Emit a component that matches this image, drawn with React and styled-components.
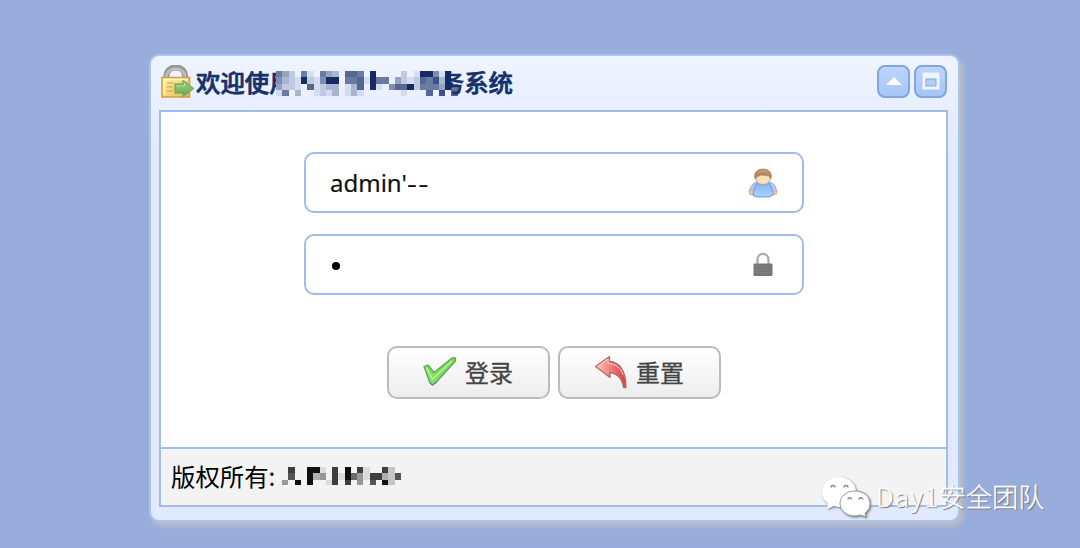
import React from 'react';
import styled, { createGlobalStyle } from 'styled-components';

const cjk = '"Noto Sans CJK SC", sans-serif';

const GlobalStyle = createGlobalStyle`
  * { box-sizing: border-box; }
  body { margin: 0; background: #98addc; font-family: ${cjk}; overflow: hidden; }
`;

const Page = styled.main`
  position: relative;
  height: 548px;
  padding: 54px 0 0 149px;
`;

const Window = styled.section`
  display: flex;
  flex-direction: column;
  width: 811px;
  height: 467.500px;
  padding: 0 10px 12px 8px;
  border: 2px solid #a6c5f1;
  border-radius: 10px;
  background: linear-gradient(#eff4ff, #e0e9fd 22%);
  box-shadow: 3px 4px 5px #bdbec2;
`;

const Header = styled.header`
  display: flex;
  align-items: center;
  height: 54px;
  flex: none;
  padding-left: 2px;
`;

const Title = styled.h1`
  display: flex;
  align-items: center;
  margin: -3px 0 0 1px;
  flex: 1;
  font-size: 24.4px;
  line-height: 36px;
  font-weight: 500;
  color: #15306a;
  -webkit-text-stroke: 0.7px #15306a;
  white-space: pre;
`;

const TitleLead = styled.span`
  width: 80px;
  overflow: hidden;
`;

const TitleTail = styled.span`
  clip-path: inset(0 0 0 11px);
`;

const Mosaic = styled.svg`
  display: block;
  flex: none;
  margin: ${(p) => p.$margin};
`;

const Tools = styled.div`
  display: flex;
  gap: 4px;
  margin: -4px 1px 0 0;
`;

const ToolButton = styled.button`
  width: 33px;
  height: 33px;
  padding: 0;
  border: 2px solid #83a5dc;
  border-radius: 8px;
  background: linear-gradient(#bdd5fc, #a5c5f6);
  display: grid;
  place-items: center;
`;

const Body = styled.div`
  flex: none;
  width: 789px;
  height: 339px;
  border: 2px solid #a0bce9;
  background: #fff;
  padding: 40px 0 0 1px;
  display: flex;
  flex-direction: column;
  align-items: center;
`;

const Field = styled.label`
  display: flex;
  align-items: center;
  width: 500px;
  height: 61px;
  margin-bottom: 20.500px;
  padding: 0 ${(p) => p.$right}px 0 24px;
  border: 2px solid #a0bce9;
  border-radius: 10px;
  flex: none;
`;

const Value = styled.span`
  flex: 1;
  font: 24px/34px "Noto Sans", sans-serif;
  color: #111;
  -webkit-text-stroke: 0.2px #111;
`;

const Dashes = styled.span`
  display: inline-block;
  transform: scaleX(1.28);
  transform-origin: 0 50%;
  letter-spacing: 1.200px;
`;

const Dot = styled.i`
  width: 8px;
  height: 8px;
  margin: 4px auto 0 2px;
  border-radius: 50%;
  background: #000;
`;

const Actions = styled.div`
  display: flex;
  gap: 8px;
  margin-top: 31px;
`;

const Button = styled.button`
  display: flex;
  align-items: center;
  width: 163px;
  height: 53px;
  padding: 0 0 1px 34px;
  gap: 8px;
  border: 2px solid #bbb;
  border-radius: 10px;
  background: linear-gradient(#fff, #ededed);
  color: #444;
  font: 24px/36px ${cjk};
  -webkit-text-stroke: 0.3px #444;
`;

const Footer = styled.footer`
  display: flex;
  align-items: center;
  width: 789px;
  height: 58px;
  padding: 0 0 2px 10px;
  border: 2px solid #a0bce9;
  border-top: 0;
  background: #f3f3f3;
  font-size: 24.4px;
  line-height: 36px;
  color: #000;
`;

const Owner = styled.span`
  width: 104px;
  white-space: nowrap;
`;

const Watermark = styled.div`
  position: absolute;
  left: 820px;
  top: 472px;
  display: flex;
  align-items: center;
  color: #fff;
  font: 300 26.3px/48px ${cjk};
  -webkit-text-stroke: 0.3px #fff;
  text-shadow: 1px 1px 1px #666;
`;

const Latin = styled.span`
  margin-left: 6px;
  letter-spacing: 1.100px;
`;

const MascotSvg = styled.svg`
  filter: drop-shadow(1px 1px 1px #777);
`;

const titleCells = [
  '642061064307760900002019951900',
  '532192159906671966042127683900',
  '422107123301370910577926664960',
  '160300121301310000001000708070',
];
const footerCells = [
  '0800991080908100820',
  '0700934081964188327',
  '4090900180804070920',
];

function Pixels({ rows, color, margin }) {
  const c = 6.26;
  return (
    <Mosaic width={rows[0].length * c} height={rows.length * c} $margin={margin} shapeRendering="crispEdges">
      {rows.flatMap((row, y) =>
        [...row].map((v, x) =>
          v === '0' ? null : (
            <rect key={`${x}-${y}`} x={x * c} y={y * c} width={c} height={c} fill={color} opacity={v === '9' ? 1 : v / 10} />
          )
        )
      )}
    </Mosaic>
  );
}

const SignInIcon = () => (
  <svg width="34" height="36" viewBox="0 0 34 36">
    <defs>
      <linearGradient id="gold" x2="1" y2="1"><stop stopColor="#fff3a7" /><stop offset="1" stopColor="#edb552" /></linearGradient>
      <linearGradient id="leaf" x2="0" y2="1"><stop stopColor="#a2d083" /><stop offset="1" stopColor="#68aa52" /></linearGradient>
    </defs>
    <path d="M5.500 14V11C5.500 -.5 24 -.5 24 11V14" fill="none" stroke="#979797" strokeWidth="6" />
    <path d="M5.500 13V11C6.500 1.500 23 1.500 24 11V13" fill="none" stroke="#bdbdbd" strokeWidth="3" />
    <rect x="1" y="12.500" width="27.500" height="19.500" fill="url(#gold)" stroke="#d99a3b" strokeWidth="1.500" />
    <path d="M3 30V14.500H27" fill="none" stroke="#fff8c8" strokeWidth="1.500" />
    <path d="M6 18h6M6 22h6M6 26h6" stroke="#e3b052" strokeWidth="1.500" />
    <path d="M14 19H22V15.500L32.500 23.500L22 31.500V28H14Z" fill="url(#leaf)" stroke="#76ab5c" strokeWidth="1.300" strokeLinejoin="round" />
    <path d="M15.500 21H23.500V18" fill="none" stroke="#bae09e" />
  </svg>
);

const UserIcon = () => (
  <svg width="30" height="30" viewBox="0 0 30 30">
    <defs><linearGradient id="shirt" x2="0" y2="1"><stop stopColor="#82b7f6" /><stop offset="1" stopColor="#a8d1ff" /></linearGradient></defs>
    <path d="M9 14C4 15 2 20 1 24L5 27H25L29 24C28 19 26 15 21 14Z" fill="#b6c8f2" stroke="#8fa9de" />
    <circle cx="3.500" cy="24.500" r="2.500" fill="#edc697" stroke="#d9ab80" strokeWidth=".6" />
    <circle cx="26.500" cy="24.500" r="2.500" fill="#edc697" stroke="#d9ab80" strokeWidth=".6" />
    <path d="M9 15Q15 19 21 15C24 19 25 24 25 27Q23 29 19 29H11Q6 29 5 27C6 22 6 19 9 15Z" fill="url(#shirt)" stroke="#7099dd" />
    <path d="M8 9C8 2 22 2 22 9V12C20 18 10 18 8 12Z" fill="#f6dfc4" stroke="#cfa883" />
    <path d="M7 11C5 5 9 1 15 1S25 5 23 11L21 8L13 7L9 9Z" fill="#b18a60" stroke="#a67d56" strokeWidth=".5" />
    <path d="M10 4.500Q15 1.500 20 4.500" stroke="#c4a177" strokeWidth="2" fill="none" />
  </svg>
);

const LockIcon = () => (
  <svg width="20" height="26" viewBox="0 0 20 26">
    <path d="M4.500 13V9C4.500 .8 15.500 .8 15.500 9V13" fill="none" stroke="#aaa" strokeWidth="2.300" />
    <rect x=".5" y="12.500" width="19" height="12.500" rx="1" fill="#777" />
    <path d="M2 15.500H18M2 18.500H18M2 21.500H18" stroke="#828282" strokeWidth=".8" />
  </svg>
);

const CheckIcon = () => (
  <svg width="34" height="32" viewBox="0 0 34 32">
    <defs><linearGradient id="check" x2="0" y2="1"><stop stopColor="#72dc54" /><stop offset="1" stopColor="#8bdf6b" /></linearGradient></defs>
    <path d="M1 10.500L5 9L11 16.500L29 2H32.500V5L12 27.500L9.500 29L7 27Z" fill="url(#check)" stroke="#5ba65b" strokeWidth="1.300" strokeLinejoin="round" />
    <path d="M3.500 12L9.500 23L29 5" fill="none" stroke="#b7f48f" strokeWidth="1.500" />
    <path d="M7 27L9.500 29L13 26" fill="none" stroke="#487b83" />
  </svg>
);

const UndoIcon = () => (
  <svg width="34" height="34" viewBox="0 0 34 34">
    <defs><linearGradient id="undo"><stop stopColor="#ffc4bd" /><stop offset="1" stopColor="#df3b3b" /></linearGradient></defs>
    <path d="M1.500 11.500L15.500 1.500V6.500C25 7 32 15 32 32.500H29.500C28 23 24 18.500 16 17.500V22.500Z" fill="url(#undo)" stroke="#ad706c" strokeWidth="1.300" strokeLinejoin="round" />
    <path d="M4 11.500L14 4V8.500C22 9 27 13 29 20" fill="none" stroke="#ffd5ce" />
  </svg>
);

const Mascot = () => (
  <MascotSvg width="50" height="48" viewBox="0 0 50 48">
    <path d="M19 5C9 5 2 12 2 20C2 26 5 29 8 31L7 37L14 34L19 35C29 35 36 28 36 20S29 5 19 5Z" fill="#fff" />
    <path d="M35 19C26 19 20 25 20 31.500C20 38 26 44 35 44L41 43L46 45L45 41C48 39 50 36 50 32C50 24 43 19 35 19Z" fill="#fff" stroke="#999" />
    <g fill="none" stroke="#888" strokeWidth="1.400">
      <path d="M11 15.500a2 2 0 1 1 4 0M24 15.500a2 2 0 1 1 4 0M28 27.500a1.800 1.800 0 1 1 3.600 0M39 27.500a1.800 1.800 0 1 1 3.600 0" />
    </g>
  </MascotSvg>
);

export default function App() {
  return (
    <Page>
      <GlobalStyle />
      <Window>
        <Header>
          <SignInIcon />
          <Title>
            <TitleLead>欢迎使用</TitleLead>
            <Pixels rows={titleCells} color="#142c63" margin="4px -24px 0 0" />
            <TitleTail>务系统</TitleTail>
          </Title>
          <Tools>
            <ToolButton aria-label="collapse">
              <svg width="18" height="10"><path d="M1 9L9 1L17 9Z" fill="#fff" /></svg>
            </ToolButton>
            <ToolButton aria-label="maximize">
              <svg width="18" height="18"><rect x=".5" y=".5" width="17" height="17" fill="#eff4ff" /><rect x="4" y="7" width="10" height="7" fill="#b3cdf7" stroke="#83a5dc" /></svg>
            </ToolButton>
          </Tools>
        </Header>
        <Body>
          <Field $right={24}><Value>admin'<Dashes>--</Dashes></Value><UserIcon /></Field>
          <Field $right={29}><Dot /><LockIcon /></Field>
          <Actions>
            <Button><CheckIcon />登录</Button>
            <Button><UndoIcon />重置</Button>
          </Actions>
        </Body>
        <Footer>
          <Owner>版权所有:</Owner>
          <Pixels rows={footerCells} color="#101010" margin="0 0 0 7px" />
        </Footer>
      </Window>
      <Watermark><Mascot /><Latin>Day1</Latin>安全团队</Watermark>
    </Page>
  );
}
